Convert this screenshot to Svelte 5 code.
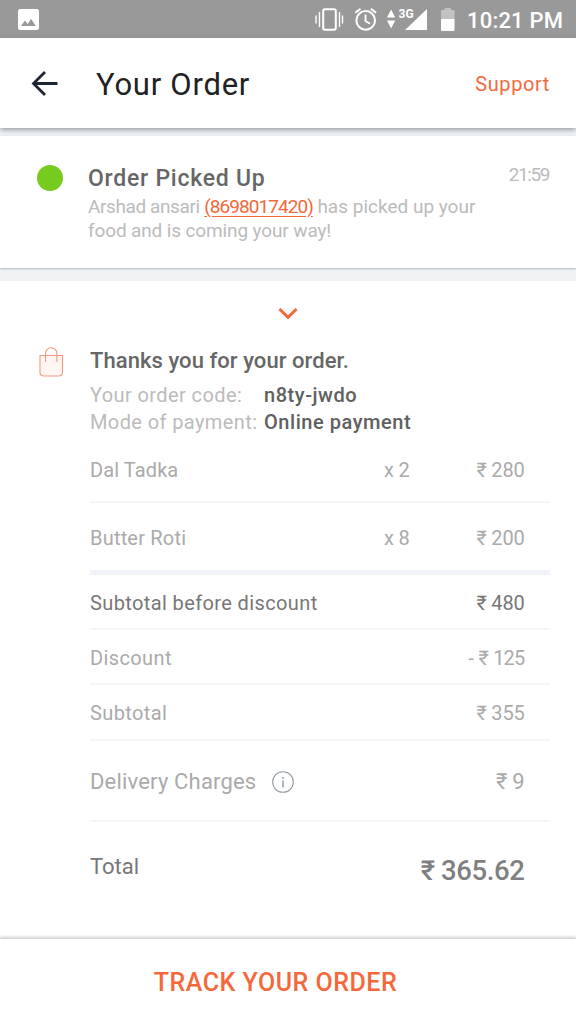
<script>
    let items=[
        {name:'Dal Tadka',qty:'x 2',price:'₹ 280',cls:'first'},
        {name:'Butter Roti',qty:'x 8',price:'₹ 200',cls:'last'},
    ]
    let charges=[
        {name:'Subtotal before discount',price:'₹ 480',cls:'dark'},
        {name:'Discount',price:'- ₹ 125',cls:'discount'},
        {name:'Subtotal',price:'₹ 355',cls:''},
        {name:'Delivery Charges',price:'₹ 9',cls:'delivery',info:true},
    ]
</script>

<div class="screen">
    <div class="status">
        <svg width="21" height="21" viewBox="0 0 21 21">
            <rect width="21" height="21" rx="2" fill="#fff"/>
            <path d="M3 17l4-5.500 2.700 3.600L13 10l5 7z" fill="#999"/>
        </svg>
        <svg width="250" height="38" viewBox="315 0 250 38" fill="#fff">
            <rect x="323.200" y="9.200" width="12.600" height="20.600" rx="1.800" fill="none" stroke="#fff" stroke-width="2"/>
            <path d="M319.500 12v15M316 15.500v8M339.500 12v15M342.500 15.500v8" stroke="#fff" stroke-width="1.400"/>
            <circle cx="365.700" cy="20.400" r="9.300" fill="none" stroke="#fff" stroke-width="2"/>
            <path d="M365.500 14.500v6.500l4.500 2.800M355.300 12.800l5.200-4M376.100 12.800l-5.200-4" fill="none" stroke="#fff" stroke-width="1.900"/>
            <path d="M387 17.500l4.100-8 4.100 8zM387 20.500l4.100 8 4.100-8zM427 9v21h-22z"/>
            <text x="398.500" y="18" class="net">3G</text>
            <path d="M441 19.200v-8.200q0-1 1-1h2.500v-2h6.500v2h2.500q1 0 1 1v8.200z" fill="#c2c2c2"/>
            <path d="M441 19h13.500v11q0 1-1 1h-11.500q-1 0-1-1z"/>
            <text x="467" y="27.500" class="clock">10:21 PM</text>
        </svg>
    </div>

    <div class="header">
        <svg width="28" height="28" viewBox="0 0 28 28" fill="none" stroke="#1c2530" stroke-width="2.800">
            <path d="M14 2L2.500 13.500 14 25M2.500 13.500H26.500"/>
        </svg>
        <h1>Your Order</h1>
        <span class="support">Support</span>
    </div>

    <div class="update">
        <span class="dot"></span>
        <div class="info">
            <h2>Order Picked Up</h2>
            <p><span class="who">Arshad ansari</span> <u>(8698017420)</u> <span class="rest">has picked up your</span><br>food and is coming your way!</p>
        </div>
        <span class="time">21:59</span>
    </div>

    <div class="order">
        <svg class="chevron" width="20" height="13" viewBox="0 0 20 13" fill="none" stroke="#f4683c" stroke-width="3">
            <path d="M1.500 2L10 10.300l8.500-8.300"/>
        </svg>
        <div class="thanks">
            <svg width="25" height="31" viewBox="0 0 25 31" fill="none" stroke="#f29b7e" stroke-width="1.100">
                <path d="M1 8.500h22.500v16.500q0 4-4 4H5q-4 0-4-4z" fill="#fff6f3"/>
                <path d="M6.500 15V6.500a5.700 5.700 0 0 1 11.400 0V15"/>
            </svg>
            <div>
                <h3>Thanks you for your order.</h3>
                <div class="meta">
                    <span>Your order code:</span><b>n8ty-jwdo</b>
                    <span>Mode of payment:</span><b>Online payment</b>
                </div>
            </div>
        </div>

        <div class="bill">
            {#each items as item}
                <div class="row {item.cls}">
                    <span>{item.name}</span>
                    <span class="qty">{item.qty}</span>
                    <span class="price">{item.price}</span>
                </div>
            {/each}
            {#each charges as item}
                <div class="row {item.cls}">
                    <span class="name">{item.name}
                        {#if item.info}
                            <svg width="22" height="22" viewBox="0 0 22 22" fill="none" stroke="#929da5">
                                <circle cx="11" cy="11" r="10.300" stroke-width="1.100"/>
                                <path d="M11 9.500v7M11 6v1.800" stroke-width="1.500"/>
                            </svg>
                        {/if}
                    </span>
                    <span class="price">{item.price}</span>
                </div>
            {/each}
            <div class="total">
                <span>Total</span>
                <span class="amount">₹ 365.62</span>
            </div>
        </div>
    </div>

    <div class="track">TRACK YOUR ORDER</div>
</div>

<style>
    :global(body){
        margin: 0;
        background-color: #eff3f6;
    }
    .screen{
        width: 576px;
        height: 1024px;
        display: flex;
        flex-direction: column;
        overflow: hidden;
        background-color: #eff3f6;
        font-family: Roboto, "Noto Sans", sans-serif;
        color: #aaa;
        white-space: nowrap;
    }
    h1, h2, h3, p{
        margin: 0;
    }
    .status{
        height: 38px;
        flex: none;
        display: flex;
        justify-content: space-between;
        align-items: center;
        padding: 0 11px 0 18px;
        background-color: #999;
    }
    .net{
        font: 700 12px Roboto, sans-serif;
    }
    .clock{
        font: 500 22px Roboto, sans-serif;
        letter-spacing: 0.2px;
    }
    .header{
        height: 90px;
        flex: none;
        display: flex;
        align-items: center;
        box-sizing: border-box;
        padding: 2px 26px 0 31px;
        background-color: #fff;
        box-shadow: 0 2px 5px rgba(70,80,90,0.5);
    }
    h1{
        flex: 1;
        margin-left: 37px;
        font-size: 31px;
        font-weight: 400;
        letter-spacing: 0.75px;
        color: #222;
    }
    .support{
        font-size: 20px;
        color: #f4683c;
        letter-spacing: 0.6px;
    }
    .update{
        height: 132px;
        flex: none;
        margin-top: 8px;
        display: flex;
        align-items: flex-start;
        box-sizing: border-box;
        padding: 29px 26px 0 37px;
        background-color: #fff;
        box-shadow: 0 1px 2px rgba(0,0,0,0.25);
    }
    .dot{
        width: 26px;
        height: 26px;
        border-radius: 50%;
        background-color: #76cc1e;
    }
    .info{
        flex: 1;
        margin-left: 25px;
    }
    h2{
        font-size: 23px;
        line-height: 28px;
        font-weight: 500;
        letter-spacing: 0.75px;
        color: #666;
    }
    p{
        margin-top: 2px;
        font-size: 19px;
        line-height: 24px;
        letter-spacing: -0.13px;
        color: #bbb;
    }
    .who{
        letter-spacing: -0.4px;
    }
    u{
        color: #f4683c;
        letter-spacing: -0.95px;
        text-underline-offset: 3px;
    }
    .rest{
        letter-spacing: 0;
    }
    .time{
        font-size: 19px;
        line-height: 20px;
        letter-spacing: -1.4px;
        color: #bbb;
        padding-right: 1px;
    }
    .order{
        height: 657px;
        flex: none;
        margin-top: 13px;
        display: flex;
        flex-direction: column;
        box-sizing: border-box;
        padding: 26px 26px 0 39px;
        background-color: #fff;
    }
    .chevron{
        flex: none;
        margin-left: 239px;
    }
    .thanks{
        height: 114px;
        display: flex;
        align-items: flex-start;
        gap: 26px;
        padding-top: 27px;
        box-sizing: border-box;
    }
    h3{
        font-size: 22px;
        line-height: 28px;
        font-weight: 500;
        letter-spacing: 0.06px;
        color: #666;
    }
    .meta{
        display: grid;
        grid-template-columns: 174px auto;
        grid-auto-rows: 27px;
        align-items: center;
        margin-top: 6px;
        font-size: 20px;
        letter-spacing: 0.4px;
        color: #bbb;
    }
    b{
        font-weight: 500;
        letter-spacing: 0.55px;
        color: #606060;
    }
    .bill{
        margin-left: 51px;
    }
    .row{
        height: 55.500px;
        display: flex;
        align-items: center;
        box-sizing: border-box;
        padding: 3px 25.500px 0 0;
        border-bottom: 2px solid #f4f5f6;
        font-size: 20px;
        letter-spacing: 0.38px;
    }
    .first{
        height: 69px;
        padding-top: 4px;
        letter-spacing: 0.1px;
    }
    .last{
        height: 72px;
        padding-top: 2px;
        border-bottom: 5px solid #f0f4f8;
        letter-spacing: 0.2px;
    }
    .dark{
        height: 54.500px;
        color: #777;
    }
    .delivery{
        height: 81.500px;
        font-size: 22px;
        letter-spacing: 0.18px;
    }
    .qty{
        margin-left: auto;
        width: 26px;
        text-align: right;
        letter-spacing: -0.2px;
    }
    .name{
        display: flex;
        align-items: center;
        gap: 16px;
    }
    .price{
        margin-left: auto;
        text-align: right;
        letter-spacing: -0.2px;
    }
    .discount .price{
        letter-spacing: -0.8px;
        word-spacing: 1px;
    }
    .qty + .price{
        width: 115px;
        margin-left: 0;
    }
    .total{
        display: flex;
        justify-content: space-between;
        padding: 30px 25.500px 0 0;
        font-size: 22px;
        line-height: 30px;
        color: #777;
    }
    .amount{
        padding-top: 4px;
        font-size: 27.500px;
        font-weight: 500;
        letter-spacing: -0.4px;
        color: #808080;
    }
    .track{
        flex: 1;
        display: flex;
        align-items: center;
        justify-content: center;
        padding: 2px 25px 0 0;
        border-top: 1px solid #d8d8d8;
        background-color: #fff;
        box-shadow: 0 -1px 3px rgba(0,0,0,0.2);
        font-size: 25px;
        font-weight: 500;
        letter-spacing: 0.5px;
        color: #f4683c;
    }
</style>
